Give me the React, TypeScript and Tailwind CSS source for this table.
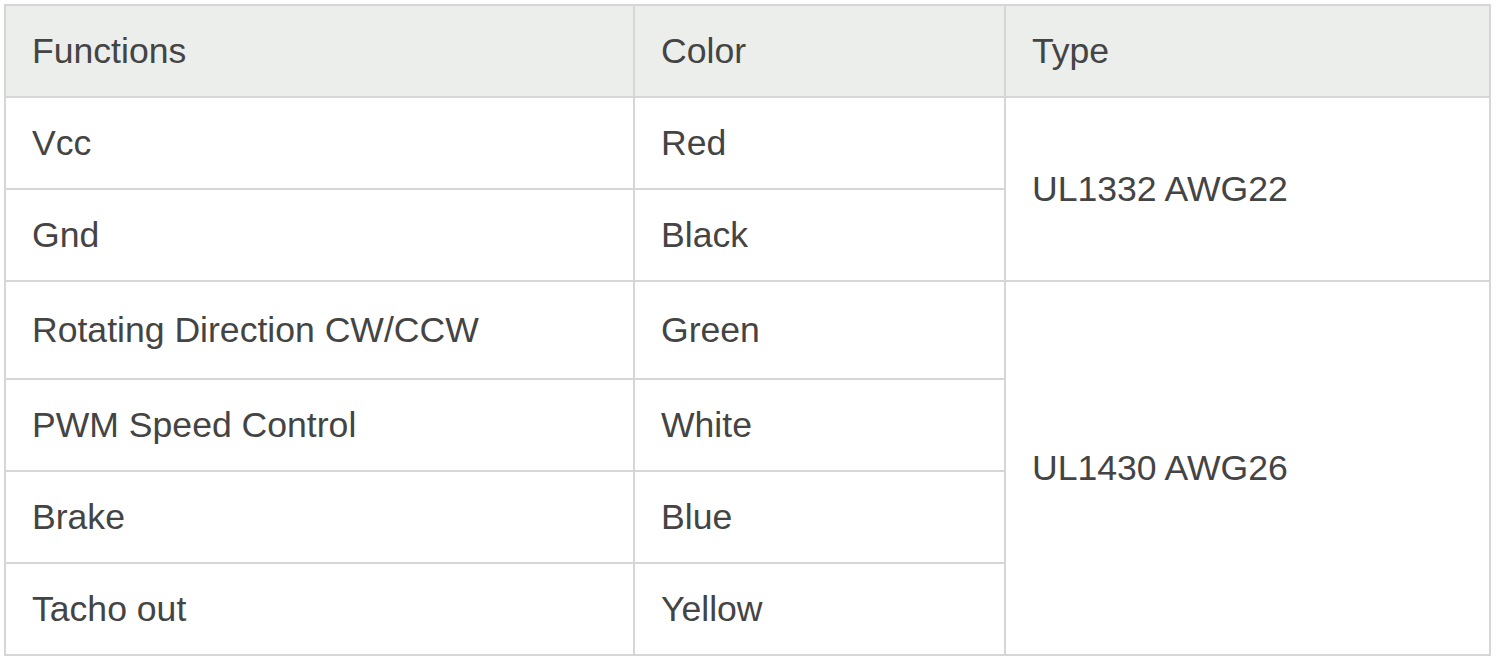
const rows = [
  { fn: 'Vcc', color: 'Red', h: 'h-[92px]' },
  { fn: 'Gnd', color: 'Black', h: 'h-[92px]' },
  { fn: 'Rotating Direction CW/CCW', color: 'Green', h: 'h-[98px]' },
  { fn: 'PWM Speed Control', color: 'White', h: 'h-[92px]' },
  { fn: 'Brake', color: 'Blue', h: 'h-[92px]' },
  { fn: 'Tacho out', color: 'Yellow', h: 'h-[92px]' },
]

const cell = 'border-2 border-[#d6d6d6] pl-[26px] align-middle'

export default function App() {
  return (
    <div
      className="bg-white p-[4px] text-[35.6px] leading-[1.2] text-[#444444]"
      style={{ fontFamily: '"Liberation Sans", Arial, sans-serif' }}
    >
      <table className="w-[1487px] table-fixed border-collapse text-left">
        <colgroup>
          <col className="w-[629px]" />
          <col className="w-[371px]" />
          <col />
        </colgroup>
        <thead>
          <tr className="h-[92px] bg-[#ebeeea]">
            <th className={`${cell} font-normal`}>Functions</th>
            <th className={`${cell} font-normal`}>Color</th>
            <th className={`${cell} font-normal`}>Type</th>
          </tr>
        </thead>
        <tbody>
          {rows.map((r, i) => (
            <tr key={r.fn} className={r.h}>
              <td className={cell}>{r.fn}</td>
              <td className={cell}>{r.color}</td>
              {i === 0 && (
                <td rowSpan={2} className={cell}>
                  UL1332 AWG22
                </td>
              )}
              {i === 2 && (
                <td rowSpan={4} className={cell}>
                  UL1430 AWG26
                </td>
              )}
            </tr>
          ))}
        </tbody>
      </table>
    </div>
  )
}
